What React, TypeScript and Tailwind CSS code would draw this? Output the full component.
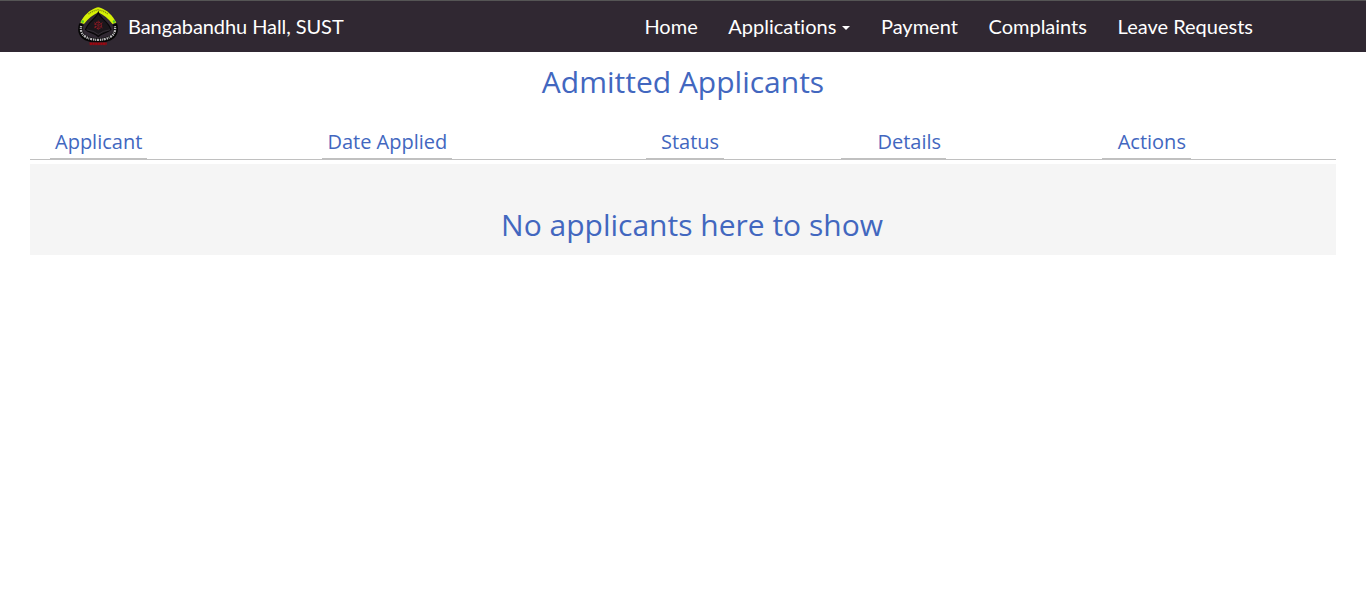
const navItems = [
  { label: "Home", caret: false },
  { label: "Applications", caret: true },
  { label: "Payment", caret: false },
  { label: "Complaints", caret: false },
  { label: "Leave Requests", caret: false },
];

const columns = [
  { label: "Applicant", box: "ml-5 w-[97px] pl-[5px]" },
  { label: "Date Applied", box: "ml-[175px] w-[130px] pl-[5.4px]" },
  { label: "Status", box: "ml-[194px] w-[78px] pl-[15px]" },
  { label: "Details", box: "ml-[117px] w-[105px] pl-[36.5px]" },
  { label: "Actions", box: "ml-[156px] w-[89px] pl-[15.7px]" },
];

function Crest() {
  return (
    <svg width="40" height="40" viewBox="0 0 40 40" className="shrink-0" aria-hidden="true">
      <path
        d="M20 4 C14 7 8 11 5 18 C2 23 4 28 9 30.5 C15 33 25 33 31 30.5 C36 28 38 23 35 18 C32 11 26 7 20 4Z"
        fill="#302832"
      />
      <path
        d="M3.4 17 C1.4 23 2.6 28.5 8 31.1 C15 34.4 25 34.4 32 31.1 C37.4 28.5 38.8 23 36.8 17"
        fill="none"
        stroke="#050505"
        strokeWidth="4.6"
      />
      <path d="M2.3 15.5 C6 8.5 11.5 3 17.5 1 Q20 -.3 23 1 C29 3 34.6 8.5 38.3 15.5 L34.5 17 C30.5 11.5 25.5 8 20.3 5.3 C15 8 10 11.5 6 17Z" fill="#d5f005" />
      <path d="M10.5 7.2 Q14.5 3.7 20 2.8 Q26 3.7 30 7.2" fill="none" stroke="#858e0c" strokeWidth="1.4" strokeDasharray="1.2 .8" />
      <circle cx="4.7" cy="14.5" r="1.3" fill="#4acb2b" />
      <circle cx="36" cy="14.5" r="1.3" fill="#4acb2b" />
      <path d="M20.3 5.5 C18.5 11.5 10.5 14 7.5 22.5 C11 26 16 25.5 20.3 29.5 C24.5 25.5 30 26 33 22.5 C30 14 22 11.5 20.3 5.5Z" fill="#1b171c" stroke="#080708" strokeWidth="1.1" />
      <path d="M8.5 22.8 Q16 23.7 20.3 27.5 Q24.5 23.7 32 22.8" fill="none" stroke="#403943" strokeWidth=".7" />
      <path d="M20.3 13.5 V23 M16 15.6 L24.6 21 M24.6 15.6 L16 21" stroke="#671820" strokeWidth="1" />
      <circle cx="20.3" cy="18.3" r="3.2" fill="none" stroke="#8c1c25" strokeWidth="1.3" strokeDasharray="1.5 1" />
      <path
        d="M3.2 19 C2.2 23.5 3.8 27.9 8.4 30.3 C15 33.7 25 33.7 31.6 30.3 C36.4 27.9 37.8 23.5 36.8 19"
        fill="none"
        stroke="#bbb9bc"
        strokeWidth="2.3"
        strokeDasharray="1.4 .7 .9 .8 2.1 .9"
      />
      <path d="M11 35.2 H29 L28.5 38.2 H11.5Z" fill="#641720" />
      <path d="M12 36.7 H28.5" stroke="#a10710" strokeWidth="2" strokeDasharray="2 .6" />
    </svg>
  );
}

export default function App() {
  return (
    <div className="min-h-screen bg-white font-['Open_Sans',sans-serif] text-[#4267bf]">
      <nav className="flex h-[52px] items-center border-t border-[#555555] bg-[#302832] pl-[78px] pr-[113px] font-['Lato',sans-serif] text-xl text-white [font-variant-ligatures:none]">
        <a className="flex items-center gap-[10px]">
          <Crest />
          <span className="pb-[2px] tracking-[-0.08px]">Bangabandhu Hall, SUST</span>
        </a>
        <ul className="ml-auto flex items-center gap-[30.65px] pb-[2px]">
          {navItems.map((item) => (
            <li key={item.label} className="flex items-center whitespace-nowrap">
              {item.label}
              {item.caret && (
                <svg width="8" height="4" viewBox="0 0 8 4" className="ml-[6px] mt-[5px]" aria-hidden="true">
                  <path d="M0 0H8L4 4Z" fill="white" />
                </svg>
              )}
            </li>
          ))}
        </ul>
      </nav>

      <main className="px-[30px]">
        <h1 className="pt-[9px] text-center text-[30px] leading-[41px]">Admitted Applicants</h1>
        <div className="mt-[25px] flex h-[33px] border-b border-[#c0c0c0] text-xl leading-[30px]">
          {columns.map((column) => (
            <div key={column.label} className={"h-[32px] shrink-0 whitespace-nowrap border-b border-[#c0c0c0] " + column.box}>
              {column.label}
            </div>
          ))}
        </div>
        <section className="mt-1 h-[91px] bg-[#f5f5f5] pl-[18px] pt-[40px]">
          <h2 className="text-center text-[30px] leading-[41px]">No applicants here to show</h2>
        </section>
      </main>
    </div>
  );
}
